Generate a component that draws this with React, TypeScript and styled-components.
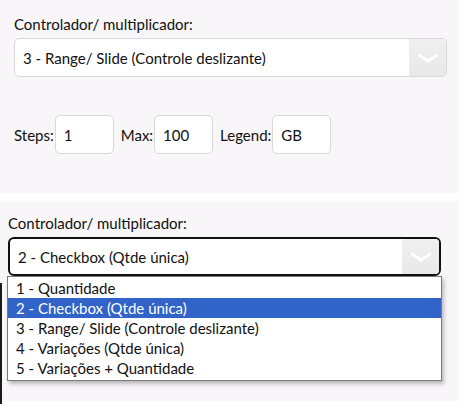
import React from "react";
import styled, { createGlobalStyle } from "styled-components";

const GlobalStyle = createGlobalStyle`
  html, body { margin: 0; padding: 0; background: #ffffff; }
  body { font-family: Lato, "Open Sans", sans-serif; font-size: 15px; color: #111; }
`;

const Page = styled.div`
  width: 466px;
  height: 416px;
  display: flex;
  flex-direction: column;
  gap: 8px;
`;

const Panel = styled.div<{ $h: number; $px: number; $pt: number }>`
  position: relative;
  width: 459px;
  height: ${(p) => p.$h}px;
  box-sizing: border-box;
  padding: ${(p) => p.$pt}px 0 0 ${(p) => p.$px}px;
  background: #f8f6f8;
  display: flex;
  flex-direction: column;
`;

const Label = styled.div`
  font-size: 15px;
  line-height: 19px;
  color: #111;
  margin-bottom: 4px;
`;

const Select = styled.div<{ $focused?: boolean }>`
  width: 433px;
  height: 39px;
  box-sizing: border-box;
  display: flex;
  align-items: stretch;
  background: #fff;
  border: ${(p) => (p.$focused ? "2px solid #111" : "1px solid #d8d8d8")};
  border-radius: ${(p) => (p.$focused ? "6px" : "5px")};
  overflow: hidden;
`;

const SelectText = styled.div`
  flex: 1;
  display: flex;
  align-items: center;
  padding-left: 8px;
  font-size: 15px;
`;

const Arrow = styled.div`
  width: 37px;
  display: flex;
  align-items: center;
  justify-content: center;
  background: linear-gradient(#f0f0f0, #e8e8e8);
`;

const Fields = styled.div`
  display: flex;
  align-items: center;
  margin-top: 38px;
`;

const FieldLabel = styled.span`
  font-size: 15px;
  margin-right: 1px;
`;

const Input = styled.div`
  width: 59px;
  height: 39px;
  box-sizing: border-box;
  border: 1px solid #d8d8d8;
  border-radius: 5px;
  background: #fff;
  display: flex;
  align-items: center;
  padding-left: 8px;
  margin-right: 7px;
  font-size: 15px;
`;

const List = styled.ul`
  position: absolute;
  left: 7px;
  top: 75px;
  width: 435px;
  margin: 0;
  padding: 1px 0 2px;
  list-style: none;
  box-sizing: border-box;
  background: #fff;
  border: 1px solid #7a7a7a;
  box-shadow: 2px 3px 4px rgba(0, 0, 0, 0.25);
`;

const Item = styled.li<{ $selected?: boolean }>`
  height: 20px;
  line-height: 20px;
  padding-left: 8px;
  font-size: 15px;
  background: ${(p) => (p.$selected ? "#3163c9" : "transparent")};
  color: ${(p) => (p.$selected ? "#fff" : "#111")};
`;

const EdgeStrip = styled.div`
  position: absolute;
  left: 0;
  top: 82px;
  width: 2px;
  height: 121px;
  background: #1a1a1a;
`;

const Chevron = () => (
  <svg width="22" height="12" viewBox="0 0 22 12">
    <path d="M1 1 L11 7 L21 1 L21 4 L11 11 L1 4 Z" fill="#ffffff" />
  </svg>
);

const options = [
  "1 - Quantidade",
  "2 - Checkbox (Qtde única)",
  "3 - Range/ Slide (Controle deslizante)",
  "4 - Variações (Qtde única)",
  "5 - Variações + Quantidade",
];

export default function App() {
  return (
    <>
      <GlobalStyle />
      <Page>
        <Panel $h={193} $px={14} $pt={15}>
          <Label>Controlador/ multiplicador:</Label>
          <Select>
            <SelectText>3 - Range/ Slide (Controle deslizante)</SelectText>
            <Arrow>
              <Chevron />
            </Arrow>
          </Select>
          <Fields>
            <FieldLabel>Steps:</FieldLabel>
            <Input>1</Input>
            <FieldLabel>Max:</FieldLabel>
            <Input>100</Input>
            <FieldLabel>Legend:</FieldLabel>
            <Input>GB</Input>
          </Fields>
        </Panel>
        <Panel $h={200} $px={8} $pt={13}>
          <Label>Controlador/ multiplicador:</Label>
          <Select $focused>
            <SelectText>2 - Checkbox (Qtde única)</SelectText>
            <Arrow>
              <Chevron />
            </Arrow>
          </Select>
          <List>
            {options.map((o, i) => (
              <Item key={o} $selected={i === 1}>
                {o}
              </Item>
            ))}
          </List>
          <EdgeStrip />
        </Panel>
      </Page>
    </>
  );
}
